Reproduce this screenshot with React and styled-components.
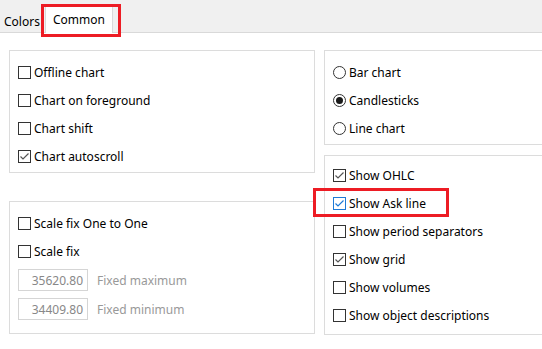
import React from 'react';
import styled, { createGlobalStyle } from 'styled-components';

const GlobalStyle = createGlobalStyle`
  body {
    margin: 0;
    background: #fff;
    font-family: "Noto Sans", "Liberation Sans", sans-serif;
    font-size: 12px;
    color: #000;
  }
`;

const Page = styled.div`
  width: 542px;
  height: 349px;
  overflow: hidden;
  background: #fff;
`;

const TabStrip = styled.div`
  height: 32px;
  background: #f0f0f0;
  border-bottom: 1px solid #d9d9d9;
  display: flex;
  align-items: flex-end;
`;

const Tab = styled.div`
  position: relative;
  height: ${p => (p.active ? '26px' : '23px')};
  margin-bottom: ${p => (p.active ? '-1px' : '0')};
  padding: ${p => (p.active ? '0 7px' : '0 3px 0 4px')};
  background: ${p => (p.active ? '#fff' : 'transparent')};
  border-right: 1px solid #d9d9d9;
  border-left: ${p => (p.active ? '1px solid #d9d9d9' : 'none')};
  margin-left: ${p => (p.active ? '1px' : '0')};
  display: flex;
  align-items: center;
  line-height: 1;
  padding-top: ${p => (p.active ? '0' : '3px')};
  box-sizing: border-box;
`;

const Mark = styled.span`
  position: absolute;
  border: 3px solid #ed1c24;
  pointer-events: none;
  left: ${p => p.l}px;
  top: ${p => p.t}px;
  width: ${p => p.w}px;
  height: ${p => p.h}px;
  box-sizing: border-box;
`;

const Content = styled.div`
  display: grid;
  grid-template-columns: 306px 306px;
  column-gap: 9px;
  padding: 17px 0 0 9px;
`;

const Column = styled.div`
  display: flex;
  flex-direction: column;
  gap: ${p => p.gap}px;
`;

const Group = styled.div`
  border: 1px solid #dcdcdc;
  height: ${p => p.h}px;
  box-sizing: border-box;
  padding: ${p => p.top}px 0 0 8px;
`;

const Row = styled.div`
  position: relative;
  height: ${p => p.h || 28}px;
  display: flex;
  align-items: center;
  gap: 3px;
  white-space: nowrap;
`;

const Box = styled.span`
  width: 13px;
  height: 13px;
  box-sizing: border-box;
  border: 1px solid ${p => (p.blue ? '#1e7ad6' : '#333')};
  background: #fff;
  display: inline-flex;
  align-items: center;
  justify-content: center;
  flex: none;
`;

const Radio = styled.span`
  width: 13px;
  height: 13px;
  box-sizing: border-box;
  border: 1px solid #333;
  border-radius: 50%;
  background: #fff;
  display: inline-flex;
  align-items: center;
  justify-content: center;
  flex: none;

  &::after {
    content: '';
    width: 7px;
    height: 7px;
    border-radius: 50%;
    background: ${p => (p.checked ? '#1a1a1a' : 'transparent')};
  }
`;

const FieldRow = styled.div`
  display: flex;
  align-items: center;
  gap: 9px;
  margin-bottom: 7px;
  color: #999;
`;

const Field = styled.div`
  width: 70px;
  height: 22px;
  box-sizing: border-box;
  border: 1px solid #d5d5d5;
  color: #888;
  display: flex;
  align-items: center;
  justify-content: flex-end;
  padding-right: 4px;
`;

const Fields = styled.div`
  padding-top: 4px;
`;

const Check = ({ checked, blue }) => (
  <Box blue={blue}>
    {checked && (
      <svg width="11" height="11" viewBox="0 0 11 11">
        <polyline
          points="1.5,5.5 4,8 9.5,2.5"
          fill="none"
          stroke={blue ? '#1e7ad6' : '#555'}
          strokeWidth="1.2"
        />
      </svg>
    )}
  </Box>
);

const CheckRow = ({ label, checked, blue, h, children }) => (
  <Row h={h}>
    <Check checked={checked} blue={blue} />
    <span>{label}</span>
    {children}
  </Row>
);

const RadioRow = ({ label, checked }) => (
  <Row>
    <Radio checked={checked} />
    <span>{label}</span>
  </Row>
);

export default function App() {
  return (
    <Page>
      <GlobalStyle />
      <TabStrip>
        <Tab>Colors</Tab>
        <Tab active>
          Common
          <Mark l={-5} t={-3} w={80} h={33} />
        </Tab>
      </TabStrip>
      <Content>
        <Column gap={28}>
          <Group h={123} top={7}>
            <CheckRow label="Offline chart" />
            <CheckRow label="Chart on foreground" />
            <CheckRow label="Chart shift" />
            <CheckRow label="Chart autoscroll" checked />
          </Group>
          <Group h={133} top={7}>
            <CheckRow label="Scale fix One to One" />
            <CheckRow label="Scale fix" />
            <Fields>
              <FieldRow>
                <Field>35620.80</Field>
                Fixed maximum
              </FieldRow>
              <FieldRow>
                <Field>34409.80</Field>
                Fixed minimum
              </FieldRow>
            </Fields>
          </Group>
        </Column>
        <Column gap={10}>
          <Group h={95} top={7}>
            <RadioRow label="Bar chart" />
            <RadioRow label="Candlesticks" checked />
            <RadioRow label="Line chart" />
          </Group>
          <Group h={180} top={5}>
            <CheckRow label="Show OHLC" checked />
            <CheckRow label="Show Ask line" checked blue>
              <Mark l={-20} t={-1} w={136} h={29} />
            </CheckRow>
            <CheckRow label="Show period separators" />
            <CheckRow label="Show grid" checked />
            <CheckRow label="Show volumes" />
            <CheckRow label="Show object descriptions" />
          </Group>
        </Column>
      </Content>
    </Page>
  );
}
